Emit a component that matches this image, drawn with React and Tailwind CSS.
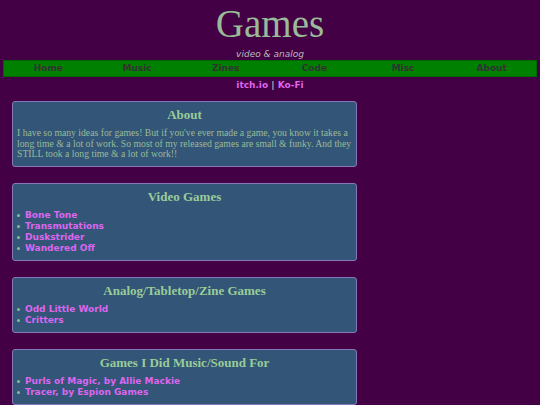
import React from "react";

const sections = [
  {
    title: "Video Games",
    items: ["Bone Tone", "Transmutations", "Duskstrider", "Wandered Off"],
  },
  {
    title: "Analog/Tabletop/Zine Games",
    items: ["Odd Little World", "Critters"],
  },
  {
    title: "Games I Did Music/Sound For",
    items: ["Purls of Magic, by Allie Mackie", "Tracer, by Espion Games"],
  },
];

const navLinks = ["Home", "Music", "Zines", "Code", "Misc", "About"];

function Box({ title, children }) {
  return (
    <section className="bg-[#335577] border border-[#8877bb] rounded-[3px] px-[3px] pt-[5px] pb-[5.5px]">
      <h2 className="text-center font-bold text-[13px] leading-[15px] text-[#99cc99] font-['Liberation_Serif',serif] mb-[6px]">
        {title}
      </h2>
      {children}
    </section>
  );
}

function App() {
  return (
    <div className="min-h-screen bg-[#440044] pb-10">
      <header className="text-center pt-[4px]">
        <h1 className="font-['Liberation_Serif',serif] text-[39px] leading-none text-[#99bb99]">
          Games
        </h1>
        <p className="font-['DejaVu_Sans',sans-serif] italic text-[9px] leading-[12px] text-[#bbbbbb] mt-[5px]">
          video &amp; analog
        </p>
      </header>

      <nav className="mx-[3px] h-[17px] bg-[#008000] border border-[#006600] flex items-center">
        {navLinks.map((link) => (
          <a
            key={link}
            href="#"
            className="flex-1 text-center font-['DejaVu_Sans',sans-serif] font-bold text-[9px] text-[#333333]"
          >
            {link}
          </a>
        ))}
      </nav>

      <p className="text-center font-['DejaVu_Sans',sans-serif] font-bold text-[9px] leading-[12px] mt-[2px] text-[#bbbbbb]">
        <a href="#" className="text-[#dd66ee]">itch.io</a> |{" "}
        <a href="#" className="text-[#dd66ee]">Ko-Fi</a>
      </p>

      <main className="ml-3 w-[345px] mt-[10px] flex flex-col gap-[16.5px]">
        <Box title="About">
          <p className="font-['Liberation_Serif',serif] text-[9.7px] leading-[10.7px] text-[#99bb99] px-px">
            I have so many ideas for games! But if you've ever made a game, you
            know it takes a long time &amp; a lot of work. So most of my released
            games are small &amp; funky. And they STILL took a long time &amp; a lot
            of work!!
          </p>
        </Box>

        {sections.map((section) => (
          <Box key={section.title} title={section.title}>
            <ul className="font-['DejaVu_Sans',sans-serif] text-[9px] leading-[11px]">
              {section.items.map((item) => (
                <li key={item} className="flex items-center">
                  <span className="ml-[1px] mr-[5px] w-[3px] h-[3px] rounded-full bg-[#88bb99]" />
                  <a href="#" className="font-bold text-[#dd66ee]">
                    {item}
                  </a>
                </li>
              ))}
            </ul>
          </Box>
        ))}
      </main>
    </div>
  );
}

export default App;
